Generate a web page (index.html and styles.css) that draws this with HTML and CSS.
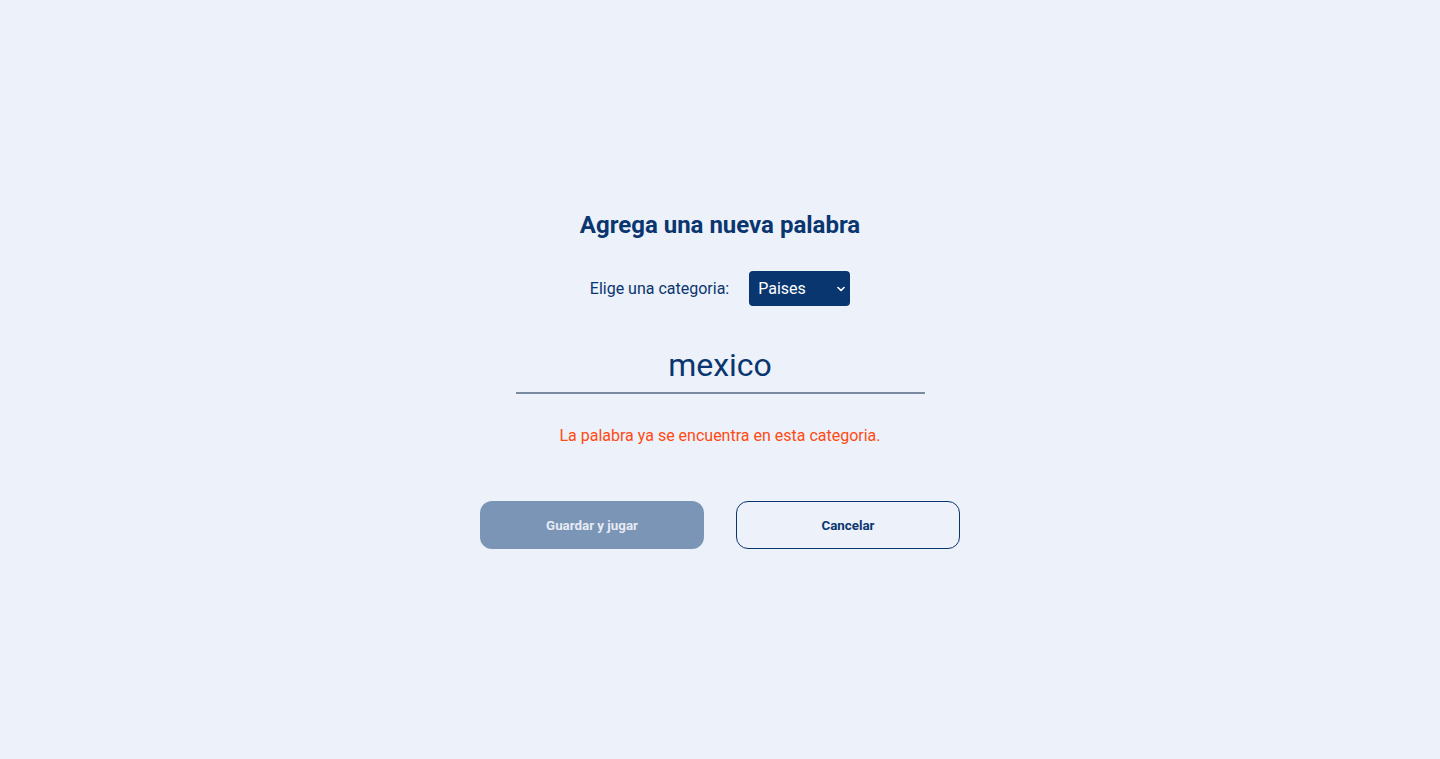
FILE: index.html
```html
<!DOCTYPE html>
<html lang="es">
<head>
<meta charset="utf-8">
<title>Agrega una nueva palabra</title>
<link rel="stylesheet" href="styles.css">
</head>
<body>
<main class="page">
  <h1 class="title">Agrega una nueva palabra</h1>
  <div class="category-row">
    <label class="category-label" for="cat">Elige una categoria:</label>
    <span class="select-wrap">
      <select id="cat" class="category-select">
        <option>Paises</option>
      </select>
      <svg class="chevron" width="8" height="6" viewBox="0 0 8 6" aria-hidden="true"><path d="M1 1.5 L4 4.5 L7 1.5" fill="none" stroke="#ffffff" stroke-width="1.6" stroke-linecap="round" stroke-linejoin="round"/></svg>
    </span>
  </div>
  <input class="word-input" type="text" value="mexico">
  <p class="error">La palabra ya se encuentra en esta categoria.</p>
  <div class="actions">
    <button class="btn btn-primary" disabled>Guardar y jugar</button>
    <button class="btn btn-outline">Cancelar</button>
  </div>
</main>
</body>
</html>
```
FILE: styles.css
```css
html, body {
  margin: 0;
  padding: 0;
}
body {
  background: #edf1fa;
  font-family: Roboto, "Liberation Sans", sans-serif;
  color: #0a3670;
}
.page {
  min-height: 759px;
  display: flex;
  flex-direction: column;
  align-items: center;
  justify-content: center;
}
.title {
  margin: 0;
  font-size: 24px;
  font-weight: 700;
  line-height: 28px;
  color: #0a3670;
}
.category-row {
  margin-top: 32px;
  display: flex;
  align-items: center;
  gap: 20px;
}
.category-label {
  font-size: 16px;
  color: #0a3670;
}
.select-wrap {
  position: relative;
  display: inline-block;
}
.category-select {
  appearance: none;
  -webkit-appearance: none;
  width: 101px;
  height: 35px;
  border: none;
  border-radius: 4px;
  background: #0a3670;
  color: #ffffff;
  font-family: Roboto, "Liberation Sans", sans-serif;
  font-size: 16px;
  padding: 0 0 0 9px;
  margin: 0;
  display: block;
}
.chevron {
  position: absolute;
  right: 5px;
  top: 15px;
  pointer-events: none;
}
.word-input {
  margin-top: 40px;
  width: 409px;
  box-sizing: border-box;
  border: none;
  border-bottom: 2px solid #7a8aa1;
  background: transparent;
  font-family: Roboto, "Liberation Sans", sans-serif;
  font-size: 32px;
  line-height: 38px;
  height: 48px;
  padding: 0 0 8px 0;
  text-align: center;
  color: #0a3670;
  outline: none;
}
.error {
  margin: 32px 0 0 0;
  font-size: 16px;
  line-height: 19px;
  color: #ff4a12;
}
.actions {
  margin-top: 56px;
  display: flex;
  gap: 32px;
}
.btn {
  width: 224px;
  height: 48px;
  border-radius: 12px;
  font-family: Roboto, "Liberation Sans", sans-serif;
  font-size: 13.333px;
  font-weight: 700;
  box-sizing: border-box;
  padding: 1px 0 0 0;
}
.btn-primary {
  background: #7b95b6;
  border: none;
  color: #e6ebf4;
}
.btn-outline {
  background: transparent;
  border: 1px solid #0a3670;
  color: #0a3670;
}
```
